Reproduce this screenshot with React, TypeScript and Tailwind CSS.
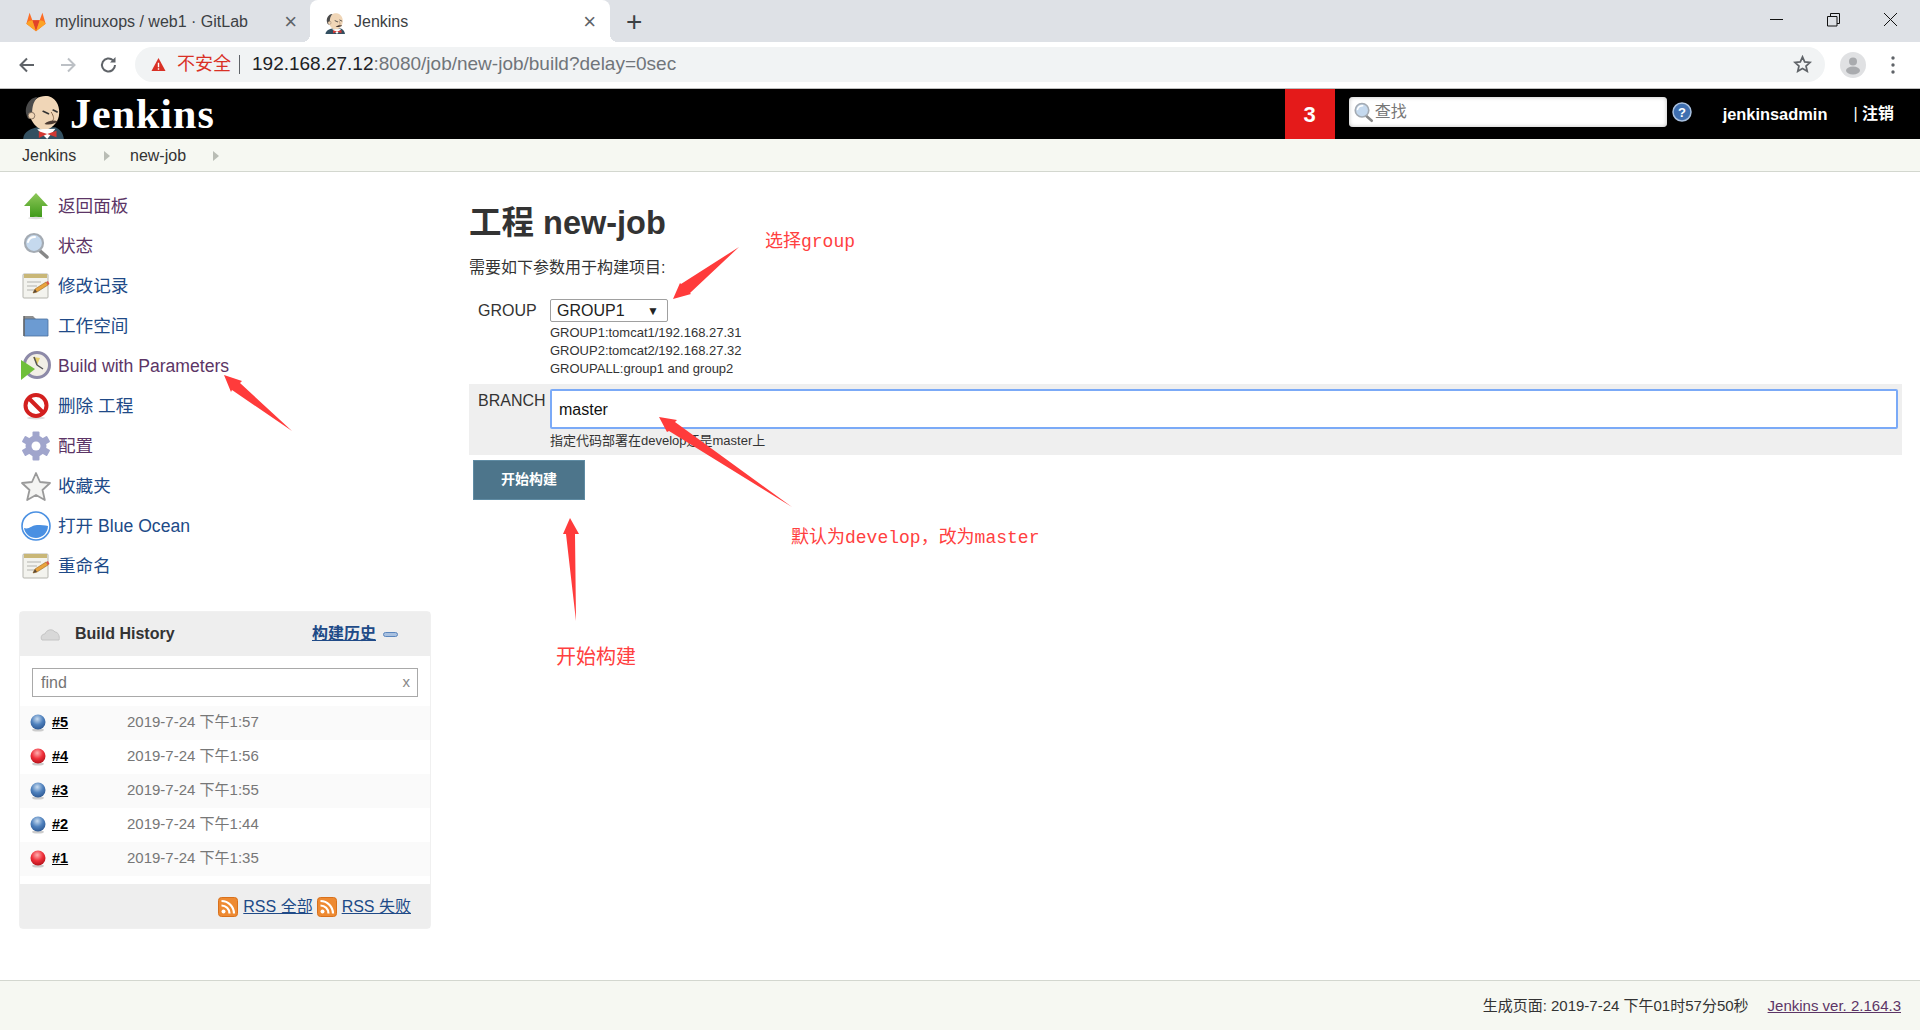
const cjk = "font-['Liberation_Sans','Noto_Sans_CJK_SC',sans-serif]";

function JenkinsHead({ className }: { className: string }) {
  return (
    <svg viewBox="25 3 125 150" className={className}>
      <path d="M28 153C30 128 55 122 70 118L125 118C140 125 148 135 150 153z" fill="#335061" />
      <path d="M50 60C55 30 85 20 105 25C130 32 140 60 135 85C130 110 105 130 85 125C65 120 55 100 50 90z" fill="#f0d6b7" />
      <path d="M38 80C30 55 50 25 72 28C60 38 55 55 55 75L50 92C45 95 40 90 38 80z" fill="#4a4a4a" />
      <circle cx="53" cy="83" r="10" fill="#f0d6b7" stroke="#5a4a40" strokeWidth="2" />
      <path d="M88 70L104 77M118 66L130 72" stroke="#333" strokeWidth="5" strokeLinecap="round" />
      <path d="M112 72C120 85 122 95 115 98" fill="none" stroke="#8a6a50" strokeWidth="3" />
      <path d="M92 108C100 98 120 95 132 100C125 108 105 112 92 108z" fill="#4a3a32" />
      <path d="M70 124L125 122L100 153z" fill="#fff" />
      <path d="M75 130L100 138L75 150zM128 128L100 138L128 148z" fill="#d33833" />
    </svg>
  );
}

function Gitlab() {
  return (
    <svg viewBox="0 0 24 24" className="w-[22px] h-[22px]">
      <path d="M12 22L1.500 14 5 2l3 8h8l3-8 3.500 12z" fill="#fc6d26" />
      <path d="M12 22L8 10h8z" fill="#e24329" />
      <path d="M12 22L1.500 14 4 11 8 10z M12 22l10.500-8L20 11l-4-1z" fill="#fca326" />
    </svg>
  );
}

function Ball({ red }: { red: boolean }) {
  const id = red ? "ball-red" : "ball-blue";
  return (
    <svg viewBox="0 0 16 18" className="w-4 h-[18px] shrink-0">
      <defs>
        <radialGradient id={id} cx="45%" cy="30%" r="70%">
          <stop offset="0" stopColor={red ? "#ffb0b0" : "#c8dcf0"} />
          <stop offset="0.55" stopColor={red ? "#ef2f3a" : "#4f81bd"} />
          <stop offset="1" stopColor={red ? "#b5141c" : "#2f5a94"} />
        </radialGradient>
      </defs>
      <ellipse cx="8" cy="16" rx="6" ry="1.600" fill="#ccc" />
      <circle cx="8" cy="8" r="7.500" fill={`url(#${id})`} />
    </svg>
  );
}

function Rss() {
  return (
    <svg viewBox="0 0 20 20" className="w-5 h-5 shrink-0">
      <rect x="0.500" y="0.500" width="19" height="19" rx="3" fill="#ee8a32" stroke="#d9711c" />
      <circle cx="5.500" cy="14.500" r="2" fill="#fff" />
      <path d="M3.500 8.500a8 8 0 0 1 8 8M3.500 4a12.500 12.500 0 0 1 12.500 12.500" fill="none" stroke="#fff" strokeWidth="2.200" />
    </svg>
  );
}

function Magnifier({ className }: { className: string }) {
  return (
    <svg viewBox="0 0 28 28" className={className}>
      <path d="M17 18l8 7" stroke="#888" strokeWidth="3.500" strokeLinecap="round" />
      <circle cx="12" cy="11" r="9" fill="#c5d9ee" stroke="#a4abb3" strokeWidth="2.200" />
      <path d="M6 10c1-4 4-5 7-5" fill="none" stroke="#fff" strokeWidth="2" strokeLinecap="round" />
    </svg>
  );
}

function NoteIcon() {
  return (
    <svg viewBox="0 0 28 28" className="w-7 h-7">
      <rect x="1" y="2" width="25" height="24" rx="1" fill="#f3f3ee" stroke="#b5b5ae" />
      <rect x="2" y="2" width="23" height="4" fill="#c9b777" />
      <path d="M5 10h14M5 14h10M5 18h7" stroke="#c9c9c4" strokeWidth="1.400" />
      <path d="M11 21l2-4 11-7 2 3-11 7z" fill="#e9a33c" stroke="#9c6a20" strokeWidth="0.600" />
      <path d="M24 10l2 3 1.500-1-1.500-3z" fill="#d9564a" />
      <path d="M11 21l2-4 2 3z" fill="#5a4a3a" />
    </svg>
  );
}

function ArrowUpIcon() {
  return (
    <svg viewBox="0 0 28 28" className="w-7 h-7">
      <defs>
        <linearGradient id="up-green" x1="0" y1="0" x2="0" y2="1">
          <stop offset="0" stopColor="#8fc85a" />
          <stop offset="1" stopColor="#3f9a1a" />
        </linearGradient>
      </defs>
      <path d="M14 1L26 14H20V25H8V14H2z" fill="url(#up-green)" />
      <ellipse cx="14" cy="26" rx="8" ry="1.200" fill="#ddd" />
    </svg>
  );
}

function FolderIcon() {
  return (
    <svg viewBox="0 0 28 28" className="w-7 h-7">
      <path d="M2 4h9l3 3h10v4H2z" fill="#8f8f8f" />
      <path d="M2 7h23a1 1 0 0 1 1 1v16H2z" fill="#6c9bd2" stroke="#4a6f9c" strokeWidth="0.800" />
      <path d="M2 4v20" stroke="#666" strokeWidth="1.500" />
    </svg>
  );
}

function ClockIcon() {
  return (
    <svg viewBox="0 0 30 30" className="w-[30px] h-[30px]">
      <circle cx="16" cy="14" r="12.500" fill="#f2efe6" stroke="#8d8aa8" strokeWidth="3" />
      <path d="M16 14l-4-8 7 1z" fill="#e6cf6c" />
      <path d="M16 14l-3-8M16 14l6 4" stroke="#555" strokeWidth="1.500" />
      <path d="M0 9l14 9-14 11z" fill="#6fbf3a" />
    </svg>
  );
}

function BlockIcon() {
  return (
    <svg viewBox="0 0 28 28" className="w-7 h-7">
      <ellipse cx="14" cy="26" rx="9" ry="1.500" fill="#ddd" />
      <circle cx="14" cy="13.500" r="10.500" fill="#fff" stroke="#d3201f" strokeWidth="4" />
      <path d="M7 6.500l14 14" stroke="#d3201f" strokeWidth="4" />
    </svg>
  );
}

function GearIcon() {
  return (
    <svg viewBox="0 0 30 30" className="w-[30px] h-[30px]">
      <g fill="#a0a5cc">
        <circle cx="15" cy="15" r="10.500" />
        <rect x="11.500" y="0.500" width="7" height="29" rx="1" />
        <rect x="11.500" y="0.500" width="7" height="29" rx="1" transform="rotate(60 15 15)" />
        <rect x="11.500" y="0.500" width="7" height="29" rx="1" transform="rotate(120 15 15)" />
      </g>
      <circle cx="15" cy="15" r="4.500" fill="#fff" />
    </svg>
  );
}

function StarIcon() {
  return (
    <svg viewBox="0 0 30 30" className="w-[30px] h-[30px]">
      <path d="M15 2l4 9 10 1-7.500 7 2.300 10L15 24l-8.800 5 2.300-10L1 12l10-1z" fill="#f4f4f2" stroke="#9a9a9a" strokeWidth="1.800" strokeLinejoin="round" />
    </svg>
  );
}

function OceanIcon() {
  return (
    <svg viewBox="0 0 30 30" className="w-[30px] h-[30px]">
      <circle cx="15" cy="15" r="14" fill="#fff" stroke="#4a90e2" strokeWidth="1.600" />
      <path d="M3 17c5 2 8-3 13-3 4 0 8 0 11 1 0 7-6 12-12 12S4 23 3 17z" fill="#4a90e2" />
    </svg>
  );
}

const tasks = [
  { label: "返回面板", icon: <ArrowUpIcon />, visited: true },
  { label: "状态", icon: <Magnifier className="w-7 h-7" />, visited: true },
  { label: "修改记录", icon: <NoteIcon />, visited: false },
  { label: "工作空间", icon: <FolderIcon />, visited: false },
  { label: "Build with Parameters", icon: <ClockIcon />, visited: true },
  { label: "删除 工程", icon: <BlockIcon />, visited: false },
  { label: "配置", icon: <GearIcon />, visited: true },
  { label: "收藏夹", icon: <StarIcon />, visited: false },
  { label: "打开 Blue Ocean", icon: <OceanIcon />, visited: false },
  { label: "重命名", icon: <NoteIcon />, visited: false },
];

const builds = [
  { num: "#5", time: "2019-7-24 下午1:57", red: false },
  { num: "#4", time: "2019-7-24 下午1:56", red: true },
  { num: "#3", time: "2019-7-24 下午1:55", red: false },
  { num: "#2", time: "2019-7-24 下午1:44", red: false },
  { num: "#1", time: "2019-7-24 下午1:35", red: true },
];

function BrowserChrome() {
  return (
    <>
      <div className="flex h-[42px] bg-[#dee1e6] text-[#3c4043] text-[16px]">
        <div className="flex items-center w-[310px] pl-[25px] pr-[13px] pt-[2px]">
          <Gitlab />
          <span className="ml-[8px] flex-1">mylinuxops / web1 · GitLab</span>
          <span className="text-[#5f6368] text-[22px] leading-none">×</span>
        </div>
        <div className="relative flex items-center w-[300px] bg-white rounded-t-lg pl-[15px] pr-[14px] pt-[2px]">
          <span className="absolute -left-2 bottom-0 w-2 h-2 bg-[radial-gradient(circle_at_0_0,transparent_8px,white_8px)]" />
          <span className="absolute -right-2 bottom-0 w-2 h-2 bg-[radial-gradient(circle_at_100%_0,transparent_8px,white_8px)]" />
          <JenkinsHead className="w-[20px] h-[24px]" />
          <span className="ml-[9px] flex-1">Jenkins</span>
          <span className="text-[#5f6368] text-[22px] leading-none">×</span>
        </div>
        <span className="ml-[16px] mt-[10px] text-[#3c4043] text-[28px] leading-[24px] font-light">+</span>
        <div className="ml-auto flex items-center h-[38px] pr-[22px] gap-[42px] text-black">
          <svg viewBox="0 0 15 15" className="w-[15px] h-[15px]"><path d="M1 7.500h13" stroke="#111" /></svg>
          <svg viewBox="0 0 15 15" className="w-[15px] h-[15px]"><path d="M4.500 4.500V1.500h9v10h-2.500M1.500 4.500h9.500v9.500H1.500z" fill="none" stroke="#111" /></svg>
          <svg viewBox="0 0 15 15" className="w-[15px] h-[15px]"><path d="M1 1l13 13M14 1L1 14" stroke="#111" /></svg>
        </div>
      </div>
      <div className="flex items-center h-[47px] bg-white border-b border-[#bdbdbd] pb-[1px]">
        <div className="flex items-center w-[135px] pl-[17px] gap-[21px]">
          <svg viewBox="0 0 20 20" className="w-5 h-5"><path d="M17 10H4M10 3.500L3.500 10l6.500 6.500" fill="none" stroke="#5f6368" strokeWidth="2" /></svg>
          <svg viewBox="0 0 20 20" className="w-5 h-5"><path d="M3 10h13M10 3.500l6.500 6.500-6.500 6.500" fill="none" stroke="#bcc0c5" strokeWidth="2" /></svg>
          <svg viewBox="0 0 20 20" className="w-5 h-5"><path d="M16 10a6.500 6.500 0 1 1-2-4.700" fill="none" stroke="#5f6368" strokeWidth="2" /><path d="M16.500 2v5.500H11z" fill="#5f6368" /></svg>
        </div>
        <div className={`flex items-center w-[1690px] h-[35px] rounded-full bg-[#f1f3f4] pl-[16px] pr-[13px] text-[18px] ${cjk}`}>
          <svg viewBox="0 0 16 16" className="w-[15px] h-[15px]"><path d="M8 1l7.500 14H.5z" fill="#d93025" /><path d="M8 6v5M8 12v1.500" stroke="#fff" strokeWidth="1.500" /></svg>
          <span className="ml-[11px] text-[#d93025]">不安全</span>
          <span className="ml-[8px] w-px h-[19px] bg-[#5f6368]" />
          <span className="ml-[12px] text-[19px] text-[#202124]">192.168.27.12<span className="text-[#70757a]">:8080/job/new-job/build?delay=0sec</span></span>
          <svg viewBox="0 0 20 20" className="w-[19px] h-[19px] ml-auto"><path d="M10 2l2.300 5.300 5.700.5-4.300 3.800 1.300 5.600L10 14.300l-5 2.900 1.300-5.600L2 7.800l5.700-.5z" fill="none" stroke="#5f6368" strokeWidth="1.800" /></svg>
        </div>
        <div className="flex items-center ml-[15px] gap-[25px]">
          <svg viewBox="0 0 26 26" className="w-[26px] h-[26px]"><circle cx="13" cy="13" r="13" fill="#e0e1e3" /><circle cx="13" cy="9.500" r="4" fill="#a9abae" /><ellipse cx="13" cy="18.500" rx="7" ry="4" fill="#a9abae" /></svg>
          <svg viewBox="0 0 4 18" className="w-1 h-[18px]"><circle cx="2" cy="2" r="1.700" fill="#5f6368" /><circle cx="2" cy="9" r="1.700" fill="#5f6368" /><circle cx="2" cy="16" r="1.700" fill="#5f6368" /></svg>
        </div>
      </div>
    </>
  );
}

function JenkinsHeader() {
  return (
    <>
      <div className={`flex items-center h-[50px] bg-black text-white ${cjk}`}>
        <JenkinsHead className="ml-[22px] w-[42px] h-[50px]" />
        <span className="ml-[6px] font-['Liberation_Serif',serif] font-bold text-[42px] leading-[50px] tracking-[1px]">Jenkins</span>
        <div className="ml-auto flex items-center justify-center w-[50px] h-[50px] bg-[#e41a1a] font-bold text-[22px]">3</div>
        <div className="flex items-center ml-[14px] mb-[4px] w-[318px] h-[30px] rounded bg-white pl-[4px] shadow-[inset_0_0_4px_#bbb]">
          <Magnifier className="w-[21px] h-[21px]" />
          <span className="text-[#777] text-[16px] ml-[1px]">查找</span>
        </div>
        <svg viewBox="0 0 20 20" className="ml-[5px] mb-[4px] w-5 h-5">
          <circle cx="10" cy="10" r="9" fill="#3f6fb0" stroke="#a9c1e0" strokeWidth="1.500" />
          <text x="10" y="15" textAnchor="middle" fontSize="13" fontWeight="700" fill="#fff" fontFamily="Liberation Sans">?</text>
        </svg>
        <span className="ml-[31px] font-bold text-[16.400px]">jenkinsadmin</span>
        <span className="ml-[26px] mr-[26px] font-bold text-[16px]"><span className="font-normal">|</span> 注销</span>
      </div>
      <div className={`flex items-center h-[33px] pt-[1px] bg-[#f6f8f2] border-b border-[#d3d7cf] text-[#333] text-[16px] ${cjk}`}>
        <span className="ml-[22px] w-[82px]">Jenkins</span>
        <svg viewBox="0 0 6 10" className="w-[6px] h-[10px]"><path d="M0 0l6 5-6 5z" fill="#b9bdb5" /></svg>
        <span className="ml-[20px] w-[83px]">new-job</span>
        <svg viewBox="0 0 6 10" className="w-[6px] h-[10px]"><path d="M0 0l6 5-6 5z" fill="#b9bdb5" /></svg>
      </div>
    </>
  );
}

function Sidebar() {
  return (
    <aside className="w-[450px] shrink-0 pt-[14px]">
      {tasks.map((t) => (
        <div key={t.label} className="flex items-center h-10 pl-[21px]">
          <span className="flex items-center justify-center w-[30px] h-[30px]">{t.icon}</span>
          <span className={`ml-[7px] text-[17.600px] ${t.visited ? "text-[#5c3566]" : "text-[#204a87]"}`}>{t.label}</span>
        </div>
      ))}
      <div className="mt-[25px] ml-[19px] w-[412px] h-[318px] rounded border border-[#f0f0f0] flex flex-col">
        <div className="flex items-center h-[44px] bg-[#eeeeee] pl-[20px] pr-[32px] text-[16px]">
          <svg viewBox="0 0 20 14" className="w-5 h-[14px]"><path d="M2 13c-2-3 0-6 3-6 1-4 7-6 10-2 3 0 5 4 4 8z" fill="#d8d8d8" stroke="#c4c4c4" /></svg>
          <span className="ml-[15px] font-bold text-[#333]">Build History</span>
          <span className="ml-auto mr-[1px] font-bold text-[#204a87] underline">构建历史</span>
          <span className="ml-[6px] w-[15px] h-[5px] rounded-sm bg-[#a9c1e0] border border-[#5b86bd]" />
        </div>
        <div className="flex-1 flex flex-col">
          <div className="flex items-center justify-between mt-[12px] mx-[12px] h-[29px] border border-[#a9a9a9] px-[8px] text-[16px] text-[#757575]">
            <span>find</span>
            <span className="text-[15px] text-[#888] -mr-[1px]">x</span>
          </div>
          <div className="mt-[9px]">
            {builds.map((b, i) => (
              <div key={b.num} className={`flex items-center h-[34px] pl-[10px] ${i % 2 === 0 ? "bg-[#fafafa]" : "bg-white"}`}>
                <Ball red={b.red} />
                <span className="ml-[6px] w-[75px] text-[14.500px] font-bold text-black underline">{b.num}</span>
                <span className="pb-[1px] text-[15px] text-[#777]">{b.time}</span>
              </div>
            ))}
          </div>
        </div>
        <div className="flex items-center justify-end h-[44px] pt-[1px] bg-[#eeeeee] pr-[19px] text-[16px] text-[#204a87]">
          <Rss />
          <span className="ml-[5px] underline">RSS 全部</span>
          <span className="ml-[4px]"><Rss /></span>
          <span className="ml-[5px] underline">RSS 失败</span>
        </div>
      </div>
    </aside>
  );
}

function BuildForm() {
  return (
    <main className="flex-1 pl-[19px] pr-[18px] pt-[31px] text-[#333]">
      <h1 className="text-[32.500px] leading-[40px] font-bold">工程 new-job</h1>
      <p className="mt-[15px] text-[16px] leading-[20px]">需要如下参数用于构建项目:</p>
      <div className="flex mt-[21px] mb-[6px]">
        <div className="w-[81px] pl-[9px] text-[16px] leading-[23px]">GROUP</div>
        <div>
          <div className="flex items-center justify-between w-[118px] h-[23px] rounded-[2px] border border-[#a0a0a0] pl-[6px] pr-[8px] text-[16px] text-[#222]">
            <span>GROUP1</span>
            <span className="text-[12px]">▼</span>
          </div>
          <div className="mt-[2px] text-[13px] leading-[18px]">
            <div>GROUP1:tomcat1/192.168.27.31</div>
            <div>GROUP2:tomcat2/192.168.27.32</div>
            <div>GROUPALL:group1 and group2</div>
          </div>
        </div>
      </div>
      <div className="flex h-[71px] pt-[5px] pr-[4px] bg-[#efefef]">
        <div className="w-[81px] pl-[9px] text-[16px] leading-[24px]">BRANCH</div>
        <div className="flex-1">
          <div className="flex items-center h-[40px] pt-[1px] rounded-[2px] border-2 border-[#7baaf7] bg-white pl-[7px] text-[16px] text-[#111]">master</div>
          <div className="mt-[3px] text-[13px] leading-[18px]">指定代码部署在develop还是master上</div>
        </div>
      </div>
      <button className="mt-[5px] ml-[4px] w-[112px] h-[40px] pb-[1px] bg-[#4d758b] border border-[#5f8ba3] text-white text-[14px] font-bold">开始构建</button>
    </main>
  );
}

function Annotations() {
  const mono = "absolute font-['Liberation_Mono','Noto_Sans_CJK_SC',monospace] text-[#ff4040] leading-none";
  return (
    <>
      <svg className="absolute inset-0 w-[1920px] h-[1030px] pointer-events-none" viewBox="0 0 1920 1030">
        <g fill="#ff3b3b">
          <path d="M673 299L680 283L681 284L739 247L690 293L691 294z" />
          <path d="M224 375L242 381L240 383L292 431L232 390L231 392z" />
          <path d="M659 417L677 420L675 422L792 507L669 431L667 432z" />
          <path d="M570 518L579 534L575 534L576 621L566 534L563 534z" />
        </g>
      </svg>
      <span className={`${mono} left-[765px] top-[233px] text-[18px]`}>选择group</span>
      <span className={`${mono} left-[791px] top-[529px] text-[18px]`}>默认为develop{"\uFF0C"}改为master</span>
      <span className={`${mono} left-[556px] top-[649px] text-[20px]`}>开始构建</span>
    </>
  );
}

export default function App() {
  return (
    <div className={`relative flex flex-col w-[1920px] h-[1030px] overflow-hidden bg-white ${cjk}`}>
      <BrowserChrome />
      <JenkinsHeader />
      <div className="flex flex-1">
        <Sidebar />
        <BuildForm />
      </div>
      <footer className="flex items-center justify-end h-[50px] pt-[1px] pr-[19px] bg-[#f6f8f2] border-t border-[#d3d7cf] text-[15px] text-[#333]">
        <span>生成页面: 2019-7-24 下午01时57分50秒</span>
        <span className="ml-[19px] text-[#5c3566] underline">Jenkins ver. 2.164.3</span>
      </footer>
      <Annotations />
    </div>
  );
}
